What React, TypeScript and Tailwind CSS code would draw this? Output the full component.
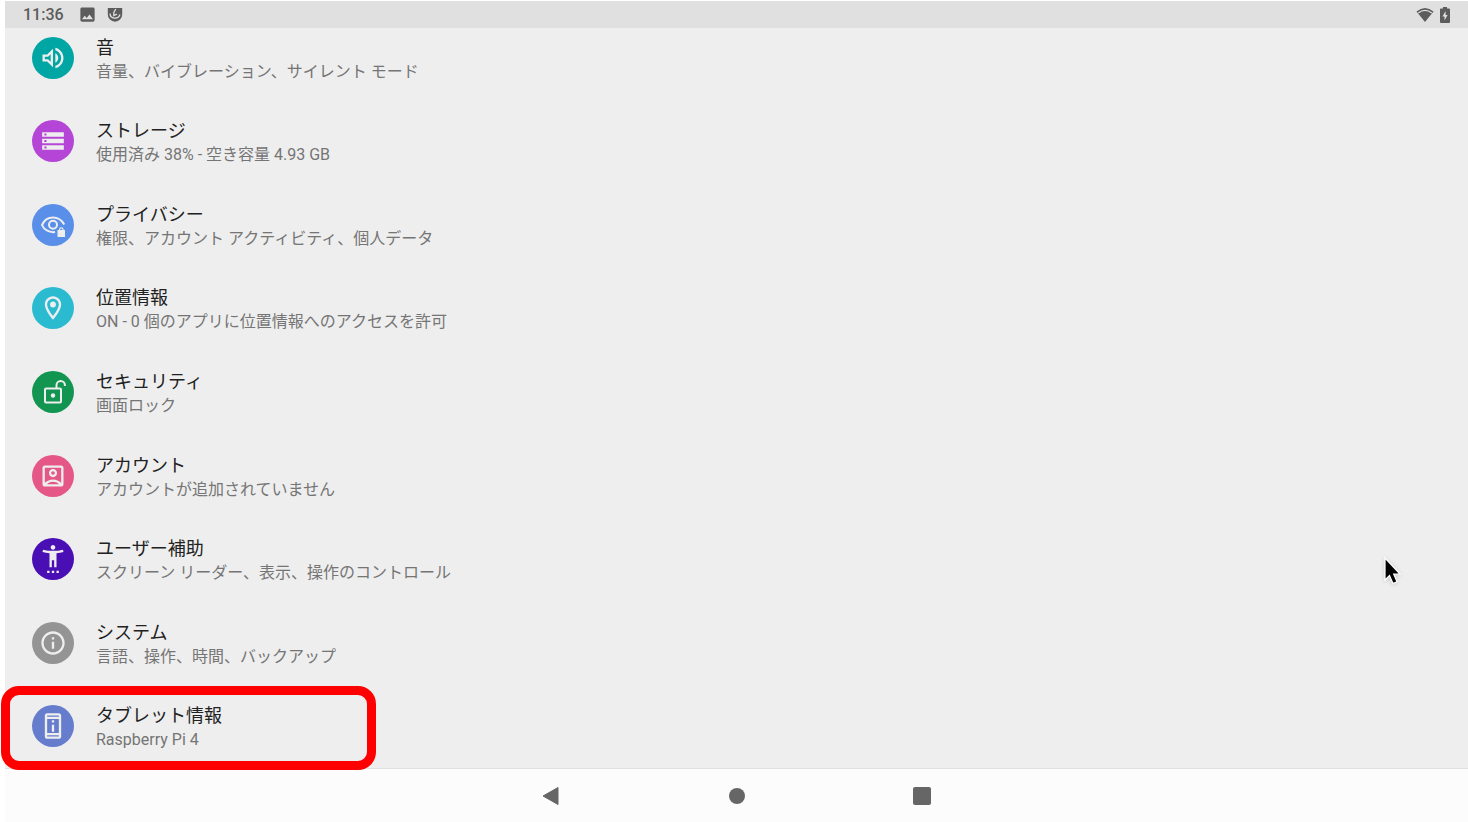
import React from "react";
import type { ReactNode } from "react";
import {
  MdOutlineVolumeUp,
  MdStorage,
  MdOutlineLocationOn,
  MdOutlineAccountBox,
  MdSettingsAccessibility,
  MdInfoOutline,
  MdOutlinePermDeviceInformation,
  MdImage,
} from "react-icons/md";

type SettingItem = {
  title: string;
  summary: string;
  color: string;
  icon: ReactNode;
  highlighted?: boolean;
};

function PrivacyIcon() {
  return (
    <svg viewBox="0 0 26 26" className="w-[26px] h-[26px]" fill="none" aria-hidden="true">
      <path
        d="M15 20C8.800 20.800 3.800 17.500 2 13C3.900 8.500 8 5.500 13 5.500C18 5.500 22 8.500 24.200 12.500"
        stroke="currentColor"
        strokeWidth="2"
      />
      <circle cx="13" cy="12.800" r="4" stroke="currentColor" strokeWidth="2" />
      <path
        d="M17.500 18h1.500v-.5a2.300 2.300 0 0 1 4.600 0v.5h1.400v7h-7.500zM20.200 18h2.200v-.5a1.100 1.100 0 0 0-2.200 0z"
        fill="currentColor"
        fillRule="evenodd"
      />
    </svg>
  );
}

function UnlockIcon() {
  return (
    <svg viewBox="0 0 26 26" className="w-[26px] h-[26px]" fill="none" aria-hidden="true">
      <rect x="5" y="9.500" width="16" height="14" rx="1" stroke="currentColor" strokeWidth="2" />
      <path d="M16.500 9.500V6.300a4.200 4.200 0 0 1 8.400 0V7" stroke="currentColor" strokeWidth="2" />
      <circle cx="13" cy="16.500" r="2.200" fill="currentColor" />
    </svg>
  );
}

const settings: SettingItem[] = [
  {
    title: "音",
    summary: "音量、バイブレーション、サイレント モード",
    color: "bg-[#00a6a4]",
    icon: <MdOutlineVolumeUp className="w-[28px] h-[28px]" />,
  },
  {
    title: "ストレージ",
    summary: "使用済み 38% - 空き容量 4.93 GB",
    color: "bg-[#b445d6]",
    icon: <MdStorage className="w-[26px] h-[26px]" />,
  },
  {
    title: "プライバシー",
    summary: "権限、アカウント アクティビティ、個人データ",
    color: "bg-[#598fe8]",
    icon: <PrivacyIcon />,
  },
  {
    title: "位置情報",
    summary: "ON - 0 個のアプリに位置情報へのアクセスを許可",
    color: "bg-[#2bbbd0]",
    icon: <MdOutlineLocationOn className="w-[28px] h-[28px]" />,
  },
  {
    title: "セキュリティ",
    summary: "画面ロック",
    color: "bg-[#129551]",
    icon: <UnlockIcon />,
  },
  {
    title: "アカウント",
    summary: "アカウントが追加されていません",
    color: "bg-[#e45786]",
    icon: <MdOutlineAccountBox className="w-[28px] h-[28px]" />,
  },
  {
    title: "ユーザー補助",
    summary: "スクリーン リーダー、表示、操作のコントロール",
    color: "bg-[#4a0eb5]",
    icon: <MdSettingsAccessibility className="w-[28px] h-[28px]" />,
  },
  {
    title: "システム",
    summary: "言語、操作、時間、バックアップ",
    color: "bg-[#949494]",
    icon: <MdInfoOutline className="w-[28px] h-[28px]" />,
  },
  {
    title: "タブレット情報",
    summary: "Raspberry Pi 4",
    color: "bg-[#667dce]",
    icon: <MdOutlinePermDeviceInformation className="w-[28px] h-[28px]" />,
    highlighted: true,
  },
];

function StatusBar() {
  return (
    <header className="relative z-10 mt-px flex h-[27px] shrink-0 items-center justify-between bg-[#e0e0e0] pl-[18px] pr-[18px] text-[#5c5c5c]">
      <div className="flex items-center">
        <span className="pt-px text-base font-medium">11:36</span>
        <MdImage className="ml-3.5 h-[19px] w-[19px]" />
        <svg viewBox="0 0 16 16" className="ml-2.5 h-4 w-4" aria-hidden="true">
          <path d="M.8 1h14.400v6.500a7.200 7.200 0 0 1-14.400 0z" fill="currentColor" />
          <path
            d="M8.800 2L6.800 5.500V8.500L10 7.200M3 6.500c.2 5.500 8 6.500 10 1"
            fill="none"
            stroke="#e0e0e0"
            strokeWidth="1.300"
          />
        </svg>
      </div>
      <div className="flex items-center gap-1.5">
        <svg viewBox="0 0 18 16" className="h-4 w-[18px]" aria-hidden="true">
          <path d="M.5 4.500Q9-2.500 17.500 4.500L9 15z" fill="currentColor" />
          <path d="M2.200 6Q9 .8 15.800 6" fill="none" stroke="#e0e0e0" strokeWidth="1.300" />
        </svg>
        <svg viewBox="0 0 10 16" className="h-4 w-2.5" aria-hidden="true">
          <path d="M3 0h4v1.500h2a1 1 0 0 1 1 1V15a1 1 0 0 1-1 1H1a1 1 0 0 1-1-1V2.500a1 1 0 0 1 1-1h2z" fill="currentColor" />
          <path d="M5.600 4L2.500 9.500h2V13.500L7.600 8H5.600z" fill="#e0e0e0" />
        </svg>
      </div>
    </header>
  );
}

function SettingRow({ item }: { item: SettingItem }) {
  return (
    <li className="relative flex flex-1">
      <button type="button" className="flex w-full items-center pl-[27px] text-left">
        <span
          className={`flex h-[42px] w-[42px] shrink-0 items-center justify-center rounded-full text-[#eeeeee] ${item.color}`}
        >
          {item.icon}
        </span>
        <span className="ml-[22px] flex flex-col pt-1">
          <span className="text-lg leading-6 text-[#212121]">{item.title}</span>
          <span className="text-base leading-6 text-[#757575]">{item.summary}</span>
        </span>
      </button>
      {item.highlighted && (
        <span className="pointer-events-none absolute -left-1 top-px h-[84px] w-[375px] rounded-[18px] border-[9px] border-[#ff0000]" />
      )}
    </li>
  );
}

function NavigationBar() {
  return (
    <nav className="flex h-[53px] shrink-0 items-center justify-center gap-[155px] bg-[#fcfcfc] text-[#666666]">
      <button type="button" aria-label="戻る" className="flex h-[30px] w-[30px] items-center justify-center">
        <svg viewBox="0 0 20 20" className="h-5 w-5">
          <path d="M16 1.500v17L1 10z" fill="currentColor" stroke="currentColor" strokeLinejoin="round" />
        </svg>
      </button>
      <button type="button" aria-label="ホーム" className="flex h-[30px] w-[30px] items-center justify-center">
        <span className="h-4 w-4 rounded-full bg-[#666666]" />
      </button>
      <button type="button" aria-label="アプリ履歴" className="flex h-[30px] w-[30px] items-center justify-center">
        <span className="h-[18px] w-[18px] rounded-[2px] bg-[#666666]" />
      </button>
    </nav>
  );
}

export default function App() {
  return (
    <div
      lang="ja"
      className="relative flex h-screen flex-col bg-white pl-[5px] font-['Roboto','Noto_Sans_CJK_JP',sans-serif]"
    >
      <StatusBar />
      <main className="flex min-h-0 flex-1 flex-col border-b border-[#e0e0e0] bg-[#eeeeee]">
        {/* The list is scrolled a little under the status bar */}
        <ul className="-mt-3 flex flex-1 flex-col">
          {settings.map((item) => (
            <SettingRow key={item.title} item={item} />
          ))}
        </ul>
      </main>
      <NavigationBar />

      {/* Mouse pointer */}
      <svg
        viewBox="0 0 20 30"
        className="pointer-events-none absolute left-[1383px] top-[556px] h-[30px] w-5 drop-shadow-sm"
        aria-hidden="true"
      >
        <path d="M2 2v22l4.500-4.500 3.500 8 4-1.800-3.300-7.700H17z" fill="#000" stroke="#fff" strokeWidth="1.200" />
      </svg>
    </div>
  );
}
